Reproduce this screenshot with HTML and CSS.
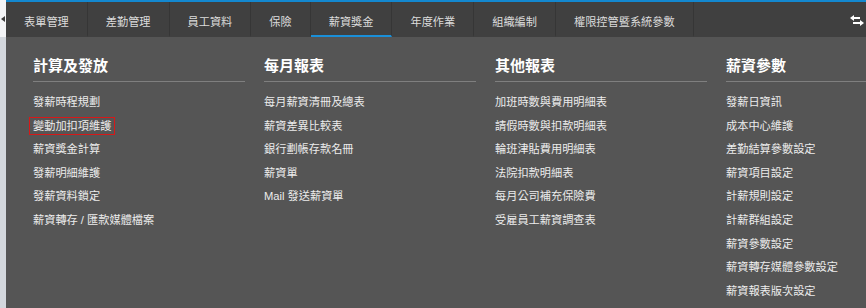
FILE: index.html
```html
<!DOCTYPE html>
<html lang="zh-Hant">
<head>
<meta charset="utf-8">
<title>薪資獎金</title>
<link rel="stylesheet" href="styles.css">
</head>
<body>
<div class="page">
  <aside class="side">
    <div class="side-top"><span class="side-arrow"></span></div>
    <div class="side-bottom"></div>
  </aside>
  <main class="main">
    <nav class="nav">
      <a class="nav-item">表單管理</a>
      <a class="nav-item">差勤管理</a>
      <a class="nav-item">員工資料</a>
      <a class="nav-item">保險</a>
      <a class="nav-item active">薪資獎金</a>
      <a class="nav-item">年度作業</a>
      <a class="nav-item">組織編制</a>
      <a class="nav-item">權限控管暨系統參數</a>
      <span class="nav-swap">
        <svg width="16" height="12" viewBox="0 0 16 12">
          <polygon points="1,3 5,0 5,6" fill="#fff"/>
          <rect x="5" y="2" width="6" height="2" fill="#fff"/>
          <polygon points="15,8 11,5 11,11" fill="#fff"/>
          <rect x="4" y="7" width="7" height="2" fill="#fff"/>
        </svg>
      </span>
    </nav>
    <section class="panel">
      <div class="col">
        <h3 class="col-title">計算及發放</h3>
        <ul class="col-list">
          <li>發薪時程規劃</li>
          <li><span class="marked">變動加扣項維護</span></li>
          <li>薪資獎金計算</li>
          <li>發薪明細維護</li>
          <li>發薪資料鎖定</li>
          <li>薪資轉存 / 匯款媒體檔案</li>
        </ul>
      </div>
      <div class="col">
        <h3 class="col-title">每月報表</h3>
        <ul class="col-list">
          <li>每月薪資清冊及總表</li>
          <li>薪資差異比較表</li>
          <li>銀行劃帳存款名冊</li>
          <li>薪資單</li>
          <li>Mail 發送薪資單</li>
        </ul>
      </div>
      <div class="col">
        <h3 class="col-title">其他報表</h3>
        <ul class="col-list">
          <li>加班時數與費用明細表</li>
          <li>請假時數與扣款明細表</li>
          <li>輪班津貼費用明細表</li>
          <li>法院扣款明細表</li>
          <li>每月公司補充保險費</li>
          <li>受雇員工薪資調查表</li>
        </ul>
      </div>
      <div class="col">
        <h3 class="col-title">薪資參數</h3>
        <ul class="col-list">
          <li>發薪日資訊</li>
          <li>成本中心維護</li>
          <li>差勤結算參數設定</li>
          <li>薪資項目設定</li>
          <li>計薪規則設定</li>
          <li>計薪群組設定</li>
          <li>薪資參數設定</li>
          <li>薪資轉存媒體參數設定</li>
          <li>薪資報表版次設定</li>
        </ul>
      </div>
    </section>
  </main>
</div>
</body>
</html>
```
FILE: styles.css
```css
* { box-sizing: border-box; }
html, body {
  margin: 0;
  padding: 0;
  width: 866px;
  height: 308px;
  overflow: hidden;
  font-family: "Liberation Sans", "Noto Sans CJK TC", sans-serif;
}
.page {
  display: flex;
  width: 866px;
  height: 308px;
}
.side {
  width: 6px;
  flex: none;
  display: flex;
  flex-direction: column;
}
.side-top {
  height: 37px;
  background: #f3f4f6;
  padding-top: 16px;
  padding-left: 1px;
}
.side-arrow {
  display: block;
  width: 0;
  height: 0;
  border-right: 4px solid #3c3c3c;
  border-top: 3.5px solid transparent;
  border-bottom: 3.5px solid transparent;
}
.side-bottom {
  flex: 1;
  background: #d3d7dd;
}
.main {
  flex: 1;
  min-width: 0;
  display: flex;
  flex-direction: column;
  border-top: 2px solid #1388d0;
}
.nav {
  height: 35px;
  background: #404040;
  display: flex;
  align-items: stretch;
}
.nav-item {
  display: flex;
  align-items: center;
  padding: 4px 18px 0;
  border-right: 1px solid #363636;
  border-bottom: 2px solid transparent;
  color: #dcdcdc;
  font-size: 11.2px;
  white-space: nowrap;
}
.nav-item.active {
  border-bottom-color: #1a8fd8;
}
.nav-swap {
  margin-left: auto;
  display: flex;
  align-items: center;
  padding: 3px 1px 0 0;
}
.panel {
  flex: 1;
  background: #555555;
  display: grid;
  grid-template-columns: repeat(4, 212px);
  column-gap: 19px;
  align-items: start;
  padding: 19px 0 0 27px;
  overflow: hidden;
}
.col-title {
  margin: 0;
  font-size: 15px;
  line-height: 20px;
  font-weight: bold;
  color: #ffffff;
  padding-bottom: 5px;
  border-bottom: 1px solid #7f7f7f;
}
.col-list {
  list-style: none;
  margin: 0;
  padding: 9px 0 0;
  font-size: 11.2px;
  line-height: 23.6px;
  color: #ececec;
}
.col-list li {
  white-space: nowrap;
}
.marked {
  display: inline-block;
  line-height: 16px;
  padding: 0 3px;
  margin-left: -4px;
  border: 1px solid #d71818;
}
```
